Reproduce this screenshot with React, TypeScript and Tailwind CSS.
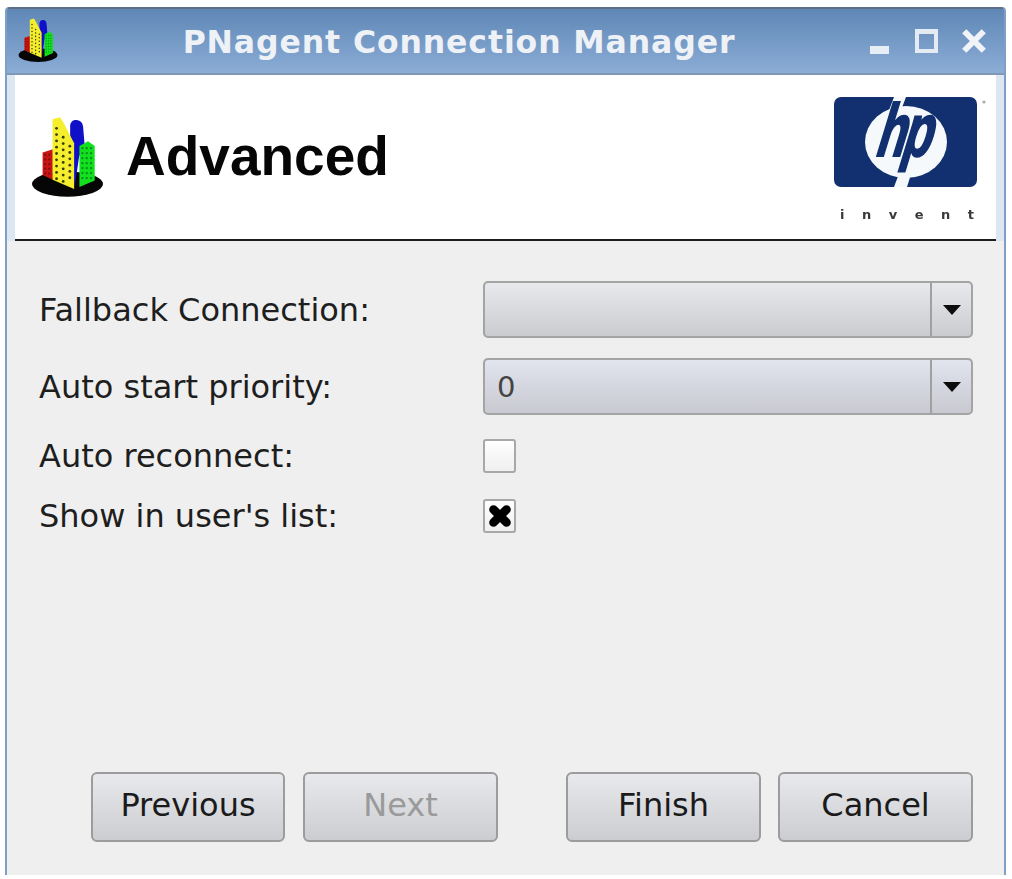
import React from "react";

function Buildings({ className }: { className: string }) {
  const yellowDots: [number, number][] = [];
  for (let r = 0; r < 9; r++) {
    for (let c = 0; c < 3; c++) {
      const x = 167 + c * 20;
      const y = 385 + r * 19 + c * 8;
      if (y < 550 && !(c === 2 && r < 2) && !(c === 1 && r < 1)) yellowDots.push([x, y]);
    }
  }
  const greenDots: [number, number][] = [];
  for (let r = 0; r < 7; r++) for (let c = 0; c < 3; c++) greenDots.push([245 + c * 13, 445 + r * 15]);
  const redDots: [number, number][] = [];
  for (let r = 0; r < 5; r++) for (let c = 0; c < 2; c++) redDots.push([133 + c * 12, 465 + r * 14]);
  return (
    <svg viewBox="90 345 220 250" className={className}>
      <ellipse cx="200" cy="553" rx="107" ry="38" fill="#060606" />
      <polygon points="125,458 156,448 156,540 125,526" fill="#c81414" />
      {redDots.map(([x, y], i) => (
        <circle key={i} cx={x} cy={y} r="3.5" fill="#801010" />
      ))}
      <path d="M208,375 Q212,358 228,360 Q245,362 247,380 L252,440 L235,470 L222,560 L208,420 Z" fill="#1010c8" />
      <polygon points="236,438 262,424 282,438 282,542 236,562" fill="#12e01e" />
      {greenDots.map(([x, y], i) => (
        <circle key={i} cx={x} cy={y} r="3.5" fill="#0a8a20" />
      ))}
      <polygon points="155,358 178,352 190,372 220,430 220,568 155,540" fill="#f4ee2c" />
      {yellowDots.map(([x, y], i) => (
        <circle key={i} cx={x} cy={y} r="4.2" fill="#3a3a10" />
      ))}
    </svg>
  );
}

function HpLogo() {
  return (
    <div className="flex flex-col items-center w-[152px] ml-auto mr-[10px] mt-[22px]">
      <svg viewBox="0 0 152 92" className="w-[152px] h-[92px] blur-[0.6px] overflow-visible">
        <rect x="0" y="0" width="143" height="90" rx="7" fill="#12306f" />
        <ellipse cx="72" cy="45" rx="41" ry="36" fill="#f6f9fc" />
        <polygon points="60,0 72,0 66,16 54,16" fill="#f6f9fc" />
        <polygon points="66,74 78,74 73,90 60,90" fill="#f6f9fc" />
        <g transform="translate(72 45) skewX(-17) scale(1 1.55) translate(-72 -45)">
          <text x="70" y="54" textAnchor="middle" fill="#12306f" stroke="#12306f" strokeWidth="1.4" fontFamily="Liberation Sans, sans-serif" fontWeight="700" fontSize="48" letterSpacing="-3">hp</text>
        </g>
        <circle cx="150" cy="5" r="1.6" fill="#aaaaaa" />
      </svg>
      <div className="w-[152px] pr-[12px] mt-[18px] flex justify-between font-['DejaVu_Sans',sans-serif] font-bold text-[13px] leading-[16px] text-[#3a3a3a] pl-[6px] blur-[0.4px]">
        <span>i</span><span>n</span><span>v</span><span>e</span><span>n</span><span>t</span>
      </div>
    </div>
  );
}

function Combo({ value, tint }: { value?: string; tint?: boolean }) {
  return (
    <div
      className={`h-[57px] w-[490px] rounded-[5px] border-2 border-[#a4a4a4] flex bg-gradient-to-b ${
        tint ? "from-[#e2e4ee] to-[#c8c9d1]" : "from-[#e8e9ec] to-[#cbccd0]"
      }`}
    >
      <div className="flex-1 flex items-center pl-[12px] text-[29px] text-[#444444]">{value}</div>
      <div className="w-[41px] border-l-2 border-[#a0a0a0] flex items-center justify-center">
        <div className="w-0 h-0 border-x-[9px] border-x-transparent border-t-[10px] border-t-[#0c0c0c]" />
      </div>
    </div>
  );
}

function Check({ checked }: { checked?: boolean }) {
  return (
    <div className="w-[33px] h-[34px] rounded-[3px] border-2 border-[#a8a8a8] bg-gradient-to-b from-[#ffffff] to-[#efefef] flex items-center justify-center">
      {checked && (
        <svg viewBox="0 0 24 24" className="w-[26px] h-[26px]">
          <path d="M6 6 L18 18 M18 6 L6 18" stroke="#000000" strokeWidth="8" strokeLinecap="round" />
        </svg>
      )}
    </div>
  );
}

function Button({ children, disabled }: { children: string; disabled?: boolean }) {
  return (
    <div
      className={`w-[195px] h-[70px] rounded-[6px] border-2 border-[#9c9c9c] bg-gradient-to-b from-[#e8e9ec] to-[#cccdd1] flex items-center justify-center pb-[4px] ${
        disabled ? "text-[#9a9a9a]" : "text-[#1a1a1a]"
      }`}
    >
      {children}
    </div>
  );
}

export default function App() {
  return (
    <div className="w-[1012px] h-[879px] bg-white pt-[7px] pl-[5px] font-['DejaVu_Sans',sans-serif]">
      <div className="w-[1001px] h-[868px] flex flex-col rounded-t-[4px] border-x-2 border-[#7f9fc6] bg-[#efefef] overflow-hidden">
        <div className="h-[68px] shrink-0 flex items-center bg-gradient-to-b from-[#5f87b6] to-[#8badd6] border-t-2 border-[#5d6f86] border-b-2 border-b-[#8297b4]">
          <Buildings className="w-[40px] h-[46px] ml-[11px] mt-[-2px]" />
          <div className="flex-1 text-center font-bold text-[31.5px] tracking-[0.9px] text-[#eef2f7] pr-[10px] mt-[3px]">
            PNagent Connection Manager
          </div>
          <div className="flex items-center mr-[17px] text-white">
            <div className="w-[19px] h-[8px] bg-[#e8eef5] mt-[17px]" />
            <div className="ml-[26px] w-[23px] h-[24px] border-[4px] border-[#e4ebf3] border-t-[5px]" />
            <svg viewBox="0 0 24 24" className="ml-[23px] w-[26px] h-[26px]">
              <path d="M3 3 L21 21 M21 3 L3 21" stroke="#f0f4f8" strokeWidth="5.5" />
            </svg>
          </div>
        </div>
        <div className="shrink-0 bg-[#dde7f2] px-[8px]">
          <div className="h-[166px] bg-white border-b-2 border-[#1c1c1c] flex items-start">
            <Buildings className="w-[73px] h-[83px] ml-[16px] mt-[40px]" />
            <div className="ml-[22px] mt-[46px] font-['Liberation_Sans',sans-serif] font-bold text-[55px] leading-[70px] text-[#060606]">
              Advanced
            </div>
            <HpLogo />
          </div>
        </div>
        <div className="flex-1 flex flex-col pl-[32px] pr-[31px] text-[32px] leading-[34px] text-[#1e1e1e]">
          <div className="grid grid-cols-[444px_490px] items-center mt-[40px] gap-y-[20px]">
            <div>Fallback Connection:</div>
            <Combo />
            <div>Auto start priority:</div>
            <Combo value="0" tint />
            <div className="mt-[4px]">Auto reconnect:</div>
            <div className="mt-[4px]"><Check /></div>
            <div className="mt-[6px]">Show in user's list:</div>
            <div className="mt-[6px]"><Check checked /></div>
          </div>
          <div className="mt-auto mb-[33px] flex pl-[52px]">
            <Button>Previous</Button>
            <div className="ml-[18px]"><Button disabled>Next</Button></div>
            <div className="ml-[68px]"><Button>Finish</Button></div>
            <div className="ml-[17px]"><Button>Cancel</Button></div>
          </div>
        </div>
      </div>
    </div>
  );
}
